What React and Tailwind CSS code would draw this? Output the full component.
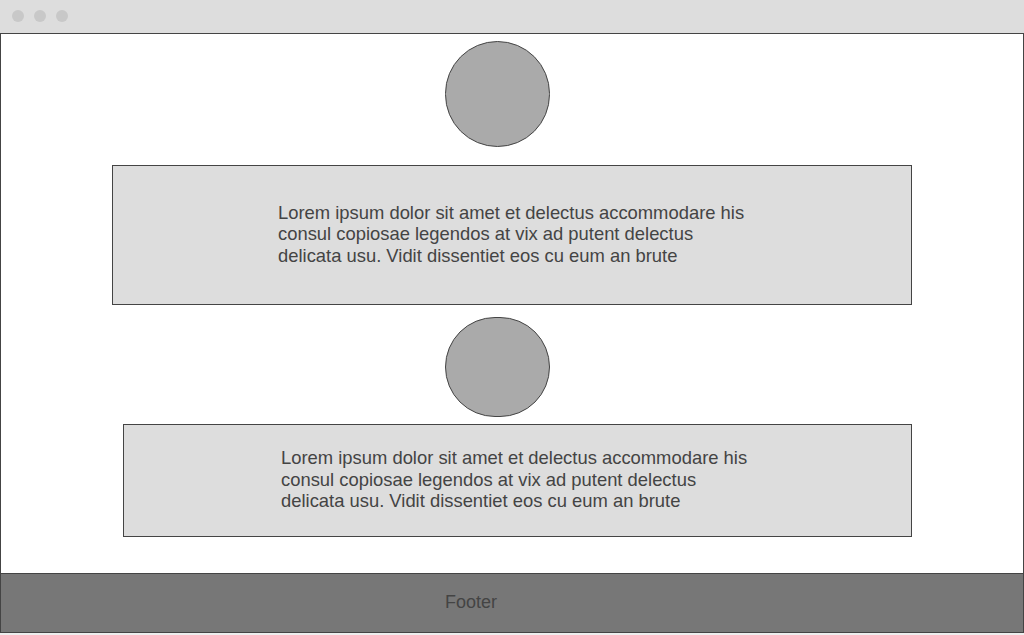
export default function App() {
  const font = { fontFamily: '"Liberation Sans", Arial, sans-serif' };
  return (
    <div className="w-[1024px] h-[635px] bg-[#eeeeee] overflow-hidden" style={font}>
      <div className="h-[33px] bg-[#dddddd] flex items-start pt-[10px] gap-[10px] pl-[12px]">
        <div className="w-[12px] h-[12px] rounded-full bg-[#c8c8c8]" />
        <div className="w-[12px] h-[12px] rounded-full bg-[#c8c8c8]" />
        <div className="w-[12px] h-[12px] rounded-full bg-[#c8c8c8]" />
      </div>
      <div className="h-[600px] border border-[#444444] bg-white flex flex-col">
        <div className="flex-1 flex flex-col">
          <div className="mt-[7px] ml-[444px] w-[105px] h-[106px] rounded-full bg-[#aaaaaa] border border-[#444444]" />
          <div className="mt-[18px] ml-[111px] w-[800px] h-[140px] bg-[#dddddd] border border-[#444444] flex items-center pl-[165px] pb-[2px]">
            <p className="text-[18.4px] leading-[21.5px] text-[#444444]">
              Lorem ipsum dolor sit amet et delectus accommodare his<br />
              consul copiosae legendos at vix ad putent delectus<br />
              delicata usu. Vidit dissentiet eos cu eum an brute
            </p>
          </div>
          <div className="mt-[12px] ml-[444px] w-[105px] h-[100px] rounded-full bg-[#aaaaaa] border border-[#444444]" />
          <div className="mt-[7px] ml-[122px] w-[789px] h-[113px] bg-[#dddddd] border border-[#444444] flex items-center pl-[157px] pb-[2px]">
            <p className="text-[18.4px] leading-[21.5px] text-[#444444]">
              Lorem ipsum dolor sit amet et delectus accommodare his<br />
              consul copiosae legendos at vix ad putent delectus<br />
              delicata usu. Vidit dissentiet eos cu eum an brute
            </p>
          </div>
        </div>
        <div className="h-[59px] border-t border-[#444444] bg-[#777777] flex items-center pl-[444px] pb-[2px]">
          <span className="text-[18px] text-[#444444]">Footer</span>
        </div>
      </div>
    </div>
  );
}
